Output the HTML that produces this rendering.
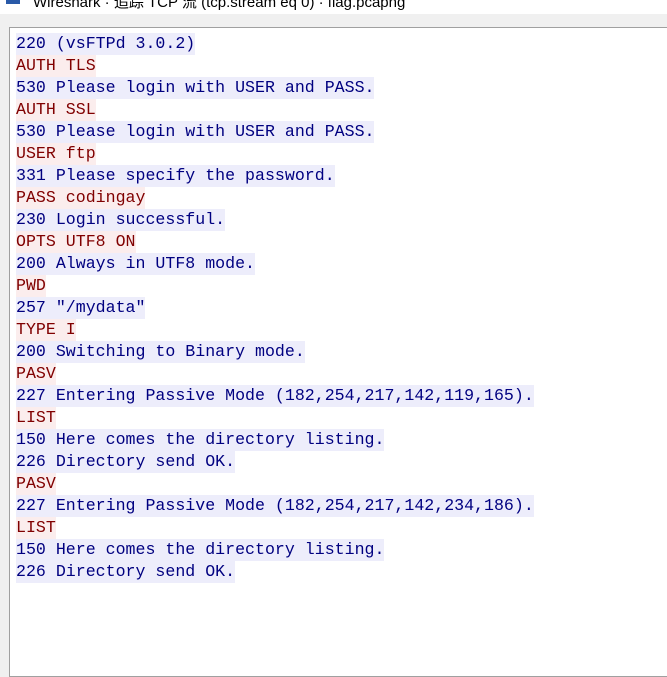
<!DOCTYPE html>
<html><head><meta charset="utf-8"><style>
body{margin:0;width:667px;height:665px;background:#f0f0f0;overflow:hidden;position:relative;font-family:"Liberation Sans","Noto Sans CJK SC",sans-serif}
.title{position:absolute;left:0;top:0;width:667px;height:14px;background:#fff;overflow:hidden}
.title span{position:absolute;left:33px;top:-9px;font-size:15px;color:#000;white-space:nowrap}
.title i{position:absolute;left:6px;top:-6px;width:14px;height:10px;background:#2a5aa8}
.box{position:absolute;left:9px;top:27px;width:670px;height:650px;background:#fff;border:1px solid #a0a0a0;box-sizing:border-box}
pre{margin:0;position:absolute;left:6px;top:5px;font-family:"Liberation Mono",monospace;font-size:16.6px;line-height:22px}
pre span{display:inline-block;height:22px}
.c{color:#800000;background:#fbeded}
.s{color:#000080;background:#ededfb}
</style></head><body>
<div class="title"><i></i><span>Wireshark · 追踪 TCP 流 (tcp.stream eq 0) · flag.pcapng</span></div>
<div class="box"><pre><span class="s">220 (vsFTPd 3.0.2)</span>
<span class="c">AUTH TLS</span>
<span class="s">530 Please login with USER and PASS.</span>
<span class="c">AUTH SSL</span>
<span class="s">530 Please login with USER and PASS.</span>
<span class="c">USER ftp</span>
<span class="s">331 Please specify the password.</span>
<span class="c">PASS codingay</span>
<span class="s">230 Login successful.</span>
<span class="c">OPTS UTF8 ON</span>
<span class="s">200 Always in UTF8 mode.</span>
<span class="c">PWD</span>
<span class="s">257 "/mydata"</span>
<span class="c">TYPE I</span>
<span class="s">200 Switching to Binary mode.</span>
<span class="c">PASV</span>
<span class="s">227 Entering Passive Mode (182,254,217,142,119,165).</span>
<span class="c">LIST</span>
<span class="s">150 Here comes the directory listing.</span>
<span class="s">226 Directory send OK.</span>
<span class="c">PASV</span>
<span class="s">227 Entering Passive Mode (182,254,217,142,234,186).</span>
<span class="c">LIST</span>
<span class="s">150 Here comes the directory listing.</span>
<span class="s">226 Directory send OK.</span></pre></div>
</body></html>
